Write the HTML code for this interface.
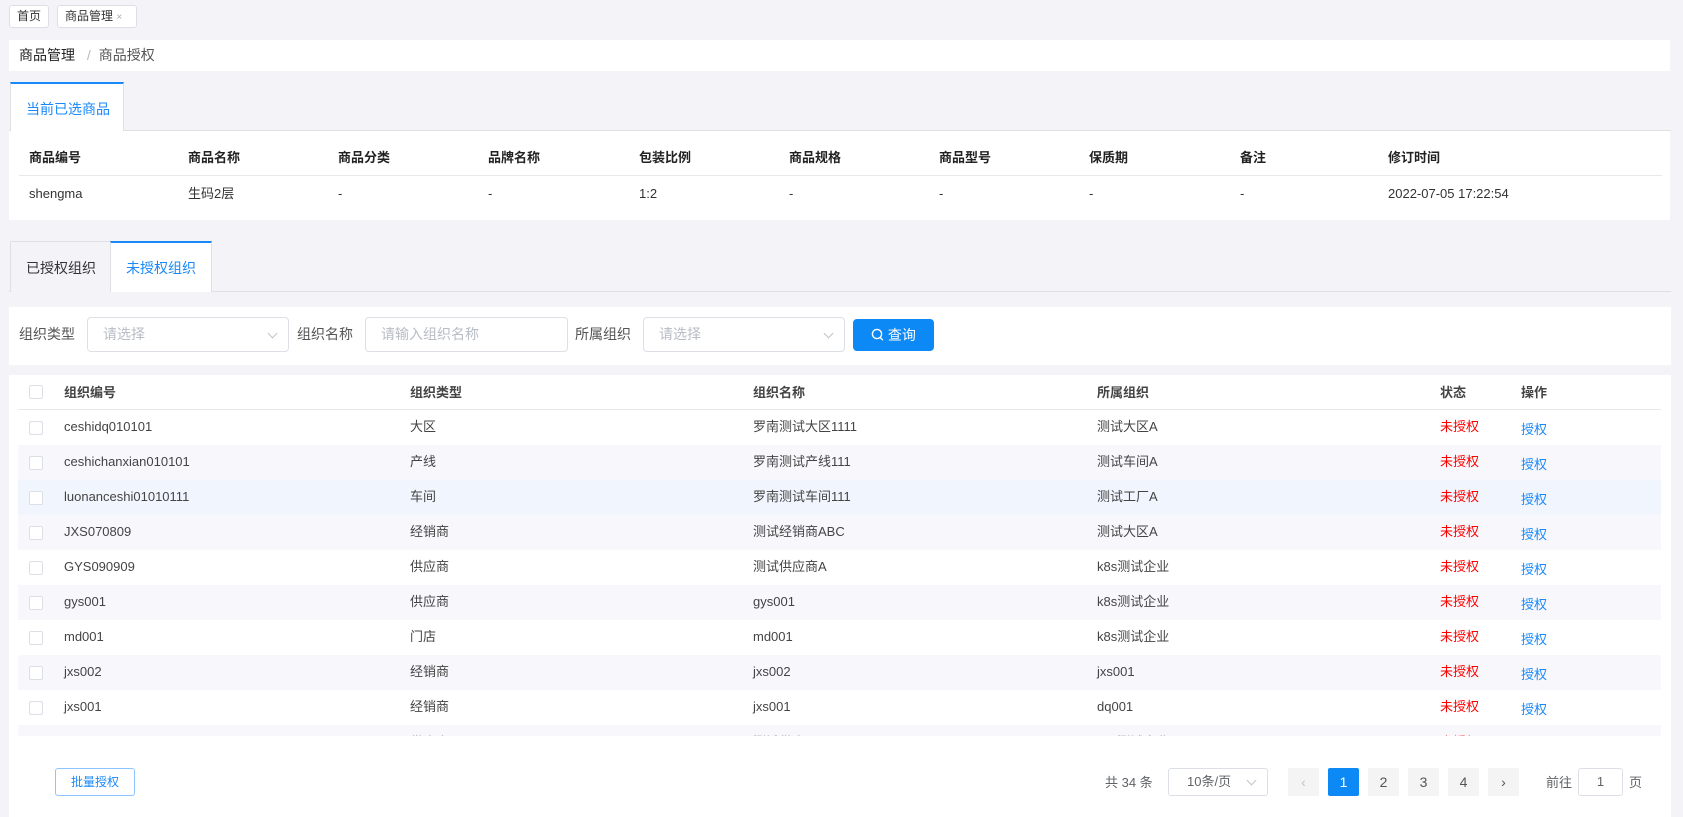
<!DOCTYPE html>
<html><head><meta charset="utf-8"><style>
*{box-sizing:border-box;margin:0;padding:0}
body{width:1683px;height:817px;overflow:hidden;background:#f4f4f8;font-family:"Liberation Sans","Noto Sans CJK SC",sans-serif;font-size:13px;color:#333;position:relative;line-height:16px}
.a{position:absolute;line-height:16px}
.tag{position:absolute;top:5px;height:23px;border:1px solid #dcdfe6;border-radius:3px;background:#fff;font-size:12px;line-height:21px;padding:0 7px;color:#333}
.w{position:absolute;background:#fff}
.th{font-weight:bold;color:#222}
.line{position:absolute;height:1px;background:#e8e8ec}
.inp{position:absolute;top:317px;height:35px;border:1px solid #dcdfe6;border-radius:4px;background:#fff;color:#b8bcc4;line-height:33px;padding-left:15px;font-size:14px}
.lbl{position:absolute;top:326px;font-size:14px;color:#555;line-height:16px}
.chev{position:absolute;right:12px;top:12px;width:7px;height:7px;border-right:1px solid #c0c4cc;border-bottom:1px solid #c0c4cc;transform:rotate(45deg)}
.row{position:absolute;left:18px;width:1643px;height:35px}
.cb{position:absolute;left:11px;top:11px;width:14px;height:14px;border:1px solid #dcdfe6;border-radius:2px;background:#fff}
.c{position:absolute;top:9px;font-size:13px;color:#444;line-height:16px;height:16px}
.pg{position:absolute;top:768px;width:31px;height:28px;background:#f4f4f5;border-radius:2px;text-align:center;line-height:28px;font-size:14px;color:#555}
</style></head><body>
<div class="tag" style="left:9px">首页</div>
<div class="tag" style="left:57px;width:80px">商品管理 <span style="color:#aaa;font-size:10px">×</span></div>

<div class="w" style="left:9px;top:40px;width:1661px;height:31px"></div>
<div class="a" style="left:19px;top:47px;font-size:14px;color:#222">商品管理 <span style="color:#bbb;margin:0 8px">/</span><span style="color:#555">商品授权</span></div>

<div class="line" style="left:9px;top:130px;width:1662px;background:#dfe0e6"></div>
<div class="w" style="left:10px;top:82px;width:114px;height:49px;border:1px solid #dfe0e6;border-top:2px solid #1989fa;border-bottom:none"></div>
<div class="a" style="left:26px;top:101px;color:#1989fa;font-size:14px">当前已选商品</div>

<div class="w" style="left:9px;top:131px;width:1661px;height:89px"></div>
<div class="line" style="left:19px;top:175px;width:1643px"></div>
<div class="a th" style="left:29px;top:150px">商品编号</div>
<div class="a th" style="left:188px;top:150px">商品名称</div>
<div class="a th" style="left:338px;top:150px">商品分类</div>
<div class="a th" style="left:488px;top:150px">品牌名称</div>
<div class="a th" style="left:639px;top:150px">包装比例</div>
<div class="a th" style="left:789px;top:150px">商品规格</div>
<div class="a th" style="left:939px;top:150px">商品型号</div>
<div class="a th" style="left:1089px;top:150px">保质期</div>
<div class="a th" style="left:1240px;top:150px">备注</div>
<div class="a th" style="left:1388px;top:150px">修订时间</div>
<div class="a" style="left:29px;top:186px">shengma</div>
<div class="a" style="left:188px;top:186px">生码2层</div>
<div class="a" style="left:338px;top:186px">-</div>
<div class="a" style="left:488px;top:186px">-</div>
<div class="a" style="left:639px;top:186px">1:2</div>
<div class="a" style="left:789px;top:186px">-</div>
<div class="a" style="left:939px;top:186px">-</div>
<div class="a" style="left:1089px;top:186px">-</div>
<div class="a" style="left:1240px;top:186px">-</div>
<div class="a" style="left:1388px;top:186px">2022-07-05 17:22:54</div>

<div class="line" style="left:9px;top:291px;width:1662px;background:#dfe0e6"></div>
<div class="a" style="left:10px;top:241px;width:101px;height:51px;border:1px solid #dfe0e6;border-bottom:none;background:#f4f4f8"></div>
<div class="a" style="left:26px;top:260px;font-size:14px;color:#333">已授权组织</div>
<div class="w" style="left:110px;top:241px;width:102px;height:51px;border:1px solid #dfe0e6;border-top:2px solid #1989fa;border-bottom:none"></div>
<div class="a" style="left:126px;top:260px;font-size:14px;color:#1989fa">未授权组织</div>

<div class="w" style="left:9px;top:307px;width:1662px;height:58px"></div>
<div class="lbl" style="left:19px">组织类型</div>
<div class="inp" style="left:87px;width:202px">请选择<div class="chev"></div></div>
<div class="lbl" style="left:297px">组织名称</div>
<div class="inp" style="left:365px;width:203px">请输入组织名称</div>
<div class="lbl" style="left:575px">所属组织</div>
<div class="inp" style="left:643px;width:202px">请选择<div class="chev"></div></div>
<div class="a" style="left:853px;top:319px;width:81px;height:32px;background:#0c89f5;border-radius:4px;color:#fff;font-size:14px;line-height:32px;text-align:center">
<svg width="13" height="14" viewBox="0 0 13 14" style="vertical-align:-2px"><circle cx="6" cy="6" r="4.6" fill="none" stroke="#fff" stroke-width="1.4"/><path d="M9.3 9.5 L11.8 12.2" stroke="#fff" stroke-width="1.4"/></svg> 查询</div>

<div class="w" style="left:9px;top:375px;width:1662px;height:442px"></div>
<div class="row" style="top:375px;height:34px"><div class="cb" style="top:10px"></div>
<div class="c th" style="left:46px;top:10px">组织编号</div><div class="c th" style="left:392px;top:10px">组织类型</div><div class="c th" style="left:735px;top:10px">组织名称</div><div class="c th" style="left:1079px;top:10px">所属组织</div><div class="c th" style="left:1422px;top:10px">状态</div><div class="c th" style="left:1503px;top:10px">操作</div></div>
<div class="line" style="left:18px;top:409px;width:1643px"></div>

<div class="row" style="top:410px;background:#fff"><div class="cb"></div><div class="c" style="left:46px">ceshidq010101</div><div class="c" style="left:392px">大区</div><div class="c" style="left:735px">罗南测试大区1111</div><div class="c" style="left:1079px">测试大区A</div><div class="c" style="left:1422px;color:#f00">未授权</div><div class="c" style="left:1503px;top:12px;color:#1989fa">授权</div></div>
<div class="row" style="top:445px;background:#f8f8fc"><div class="cb"></div><div class="c" style="left:46px">ceshichanxian010101</div><div class="c" style="left:392px">产线</div><div class="c" style="left:735px">罗南测试产线111</div><div class="c" style="left:1079px">测试车间A</div><div class="c" style="left:1422px;color:#f00">未授权</div><div class="c" style="left:1503px;top:12px;color:#1989fa">授权</div></div>
<div class="row" style="top:480px;background:#f1f5fd"><div class="cb"></div><div class="c" style="left:46px">luonanceshi01010111</div><div class="c" style="left:392px">车间</div><div class="c" style="left:735px">罗南测试车间111</div><div class="c" style="left:1079px">测试工厂A</div><div class="c" style="left:1422px;color:#f00">未授权</div><div class="c" style="left:1503px;top:12px;color:#1989fa">授权</div></div>
<div class="row" style="top:515px;background:#f8f8fc"><div class="cb"></div><div class="c" style="left:46px">JXS070809</div><div class="c" style="left:392px">经销商</div><div class="c" style="left:735px">测试经销商ABC</div><div class="c" style="left:1079px">测试大区A</div><div class="c" style="left:1422px;color:#f00">未授权</div><div class="c" style="left:1503px;top:12px;color:#1989fa">授权</div></div>
<div class="row" style="top:550px;background:#fff"><div class="cb"></div><div class="c" style="left:46px">GYS090909</div><div class="c" style="left:392px">供应商</div><div class="c" style="left:735px">测试供应商A</div><div class="c" style="left:1079px">k8s测试企业</div><div class="c" style="left:1422px;color:#f00">未授权</div><div class="c" style="left:1503px;top:12px;color:#1989fa">授权</div></div>
<div class="row" style="top:585px;background:#f8f8fc"><div class="cb"></div><div class="c" style="left:46px">gys001</div><div class="c" style="left:392px">供应商</div><div class="c" style="left:735px">gys001</div><div class="c" style="left:1079px">k8s测试企业</div><div class="c" style="left:1422px;color:#f00">未授权</div><div class="c" style="left:1503px;top:12px;color:#1989fa">授权</div></div>
<div class="row" style="top:620px;background:#fff"><div class="cb"></div><div class="c" style="left:46px">md001</div><div class="c" style="left:392px">门店</div><div class="c" style="left:735px">md001</div><div class="c" style="left:1079px">k8s测试企业</div><div class="c" style="left:1422px;color:#f00">未授权</div><div class="c" style="left:1503px;top:12px;color:#1989fa">授权</div></div>
<div class="row" style="top:655px;background:#f8f8fc"><div class="cb"></div><div class="c" style="left:46px">jxs002</div><div class="c" style="left:392px">经销商</div><div class="c" style="left:735px">jxs002</div><div class="c" style="left:1079px">jxs001</div><div class="c" style="left:1422px;color:#f00">未授权</div><div class="c" style="left:1503px;top:12px;color:#1989fa">授权</div></div>
<div class="row" style="top:690px;background:#fff"><div class="cb"></div><div class="c" style="left:46px">jxs001</div><div class="c" style="left:392px">经销商</div><div class="c" style="left:735px">jxs001</div><div class="c" style="left:1079px">dq001</div><div class="c" style="left:1422px;color:#f00">未授权</div><div class="c" style="left:1503px;top:12px;color:#1989fa">授权</div></div>
<div class="row" style="top:725px;height:11px;background:#f8f8fc;overflow:hidden"><div class="cb"></div><div class="c" style="left:392px;color:#bbb">供应商</div><div class="c" style="left:735px;color:#bbb">测试供应</div><div class="c" style="left:1079px;color:#bbb">k8s测试企业</div><div class="c" style="left:1422px;color:#f88">未授权</div></div>

<div class="a" style="left:55px;top:768px;width:80px;height:28px;border:1px solid #8cc5ff;border-radius:3px;color:#1989fa;font-size:12px;line-height:26px;text-align:center;background:#fff">批量授权</div>
<div class="a" style="left:1105px;top:775px;color:#606266;font-size:13px">共 34 条</div>
<div class="a" style="left:1168px;top:768px;width:100px;height:28px;border:1px solid #dcdfe6;border-radius:3px;color:#606266;line-height:26px;padding-left:18px;font-size:13px">10条/页<div class="chev" style="top:8px;right:12px"></div></div>
<div class="pg" style="left:1288px;color:#c0c4cc">‹</div>
<div class="pg" style="left:1328px;background:#0c89f5;color:#fff">1</div>
<div class="pg" style="left:1368px">2</div>
<div class="pg" style="left:1408px">3</div>
<div class="pg" style="left:1448px">4</div>
<div class="pg" style="left:1488px">›</div>
<div class="a" style="left:1546px;top:775px;color:#606266">前往</div>
<div class="a" style="left:1578px;top:768px;width:45px;height:28px;border:1px solid #dcdfe6;border-radius:3px;text-align:center;line-height:26px;color:#606266">1</div>
<div class="a" style="left:1629px;top:775px;color:#606266">页</div>
</body></html>
